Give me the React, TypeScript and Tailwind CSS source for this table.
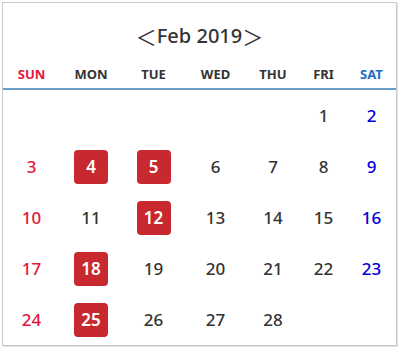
const days = [
  { label: "SUN", color: "text-[#e3173e]" },
  { label: "MON", color: "text-[#333]" },
  { label: "TUE", color: "text-[#333]" },
  { label: "WED", color: "text-[#333]" },
  { label: "THU", color: "text-[#333]" },
  { label: "FRI", color: "text-[#333]" },
  { label: "SAT", color: "text-[#1b6ec2]" },
]

// Feb 2019 starts on a Friday
const cells: (number | null)[] = [null, null, null, null, null, 1, 2]
for (let d = 3; d <= 28; d++) cells.push(d)
while (cells.length % 7 !== 0) cells.push(null)

const marked = new Set([4, 5, 12, 18, 25])

export default function App() {
  return (
    <div className="w-[400px] h-[347px] bg-white p-[2px]" style={{ fontFamily: '"Noto Sans", "Open Sans", sans-serif' }}>
      <div className="w-[395px] h-[344px] border border-[#c9c9c9] shadow-[1px_1px_0_#e2e2e2] flex flex-col">
        <div className="pt-[19px] h-[28px] box-content flex justify-center items-center text-[20px] font-medium text-[#333] leading-none">
          <span className="text-[21px] font-normal" style={{ fontFamily: '"Noto Sans CJK KR", sans-serif' }}>＜</span>
          <span>Feb 2019</span>
          <span className="text-[21px] font-normal" style={{ fontFamily: '"Noto Sans CJK KR", sans-serif' }}>＞</span>
        </div>

        <div className="mt-[15px] grid grid-cols-[57px_62px_63px_61px_54px_47px_49px] h-[20px] items-center">
          {days.map((d) => (
            <div key={d.label} className={`text-center text-[13px] font-bold ${d.color}`}>
              {d.label}
            </div>
          ))}
        </div>

        <div className="mt-[3px] h-[2px] bg-[#6a9dc6]" />

        <div className="grid grid-cols-[57px_62px_63px_61px_54px_47px_49px] auto-rows-[51px]">
          {cells.map((n, i) => {
            const col = i % 7
            let color = "text-[#333]"
            if (col === 0) color = "text-[#e3173e]"
            if (col === 6) color = "text-[#0000dd]"
            return (
              <div key={i} className="flex items-center justify-center">
                {n !== null &&
                  (marked.has(n) ? (
                    <span className="w-[34px] h-[34px] rounded-[4px] bg-[#c8292e] text-white flex items-center justify-center text-[17px] font-semibold">
                      {n}
                    </span>
                  ) : (
                    <span className={`text-[17px] font-medium ${color}`}>{n}</span>
                  ))}
              </div>
            )
          })}
        </div>
      </div>
    </div>
  )
}
